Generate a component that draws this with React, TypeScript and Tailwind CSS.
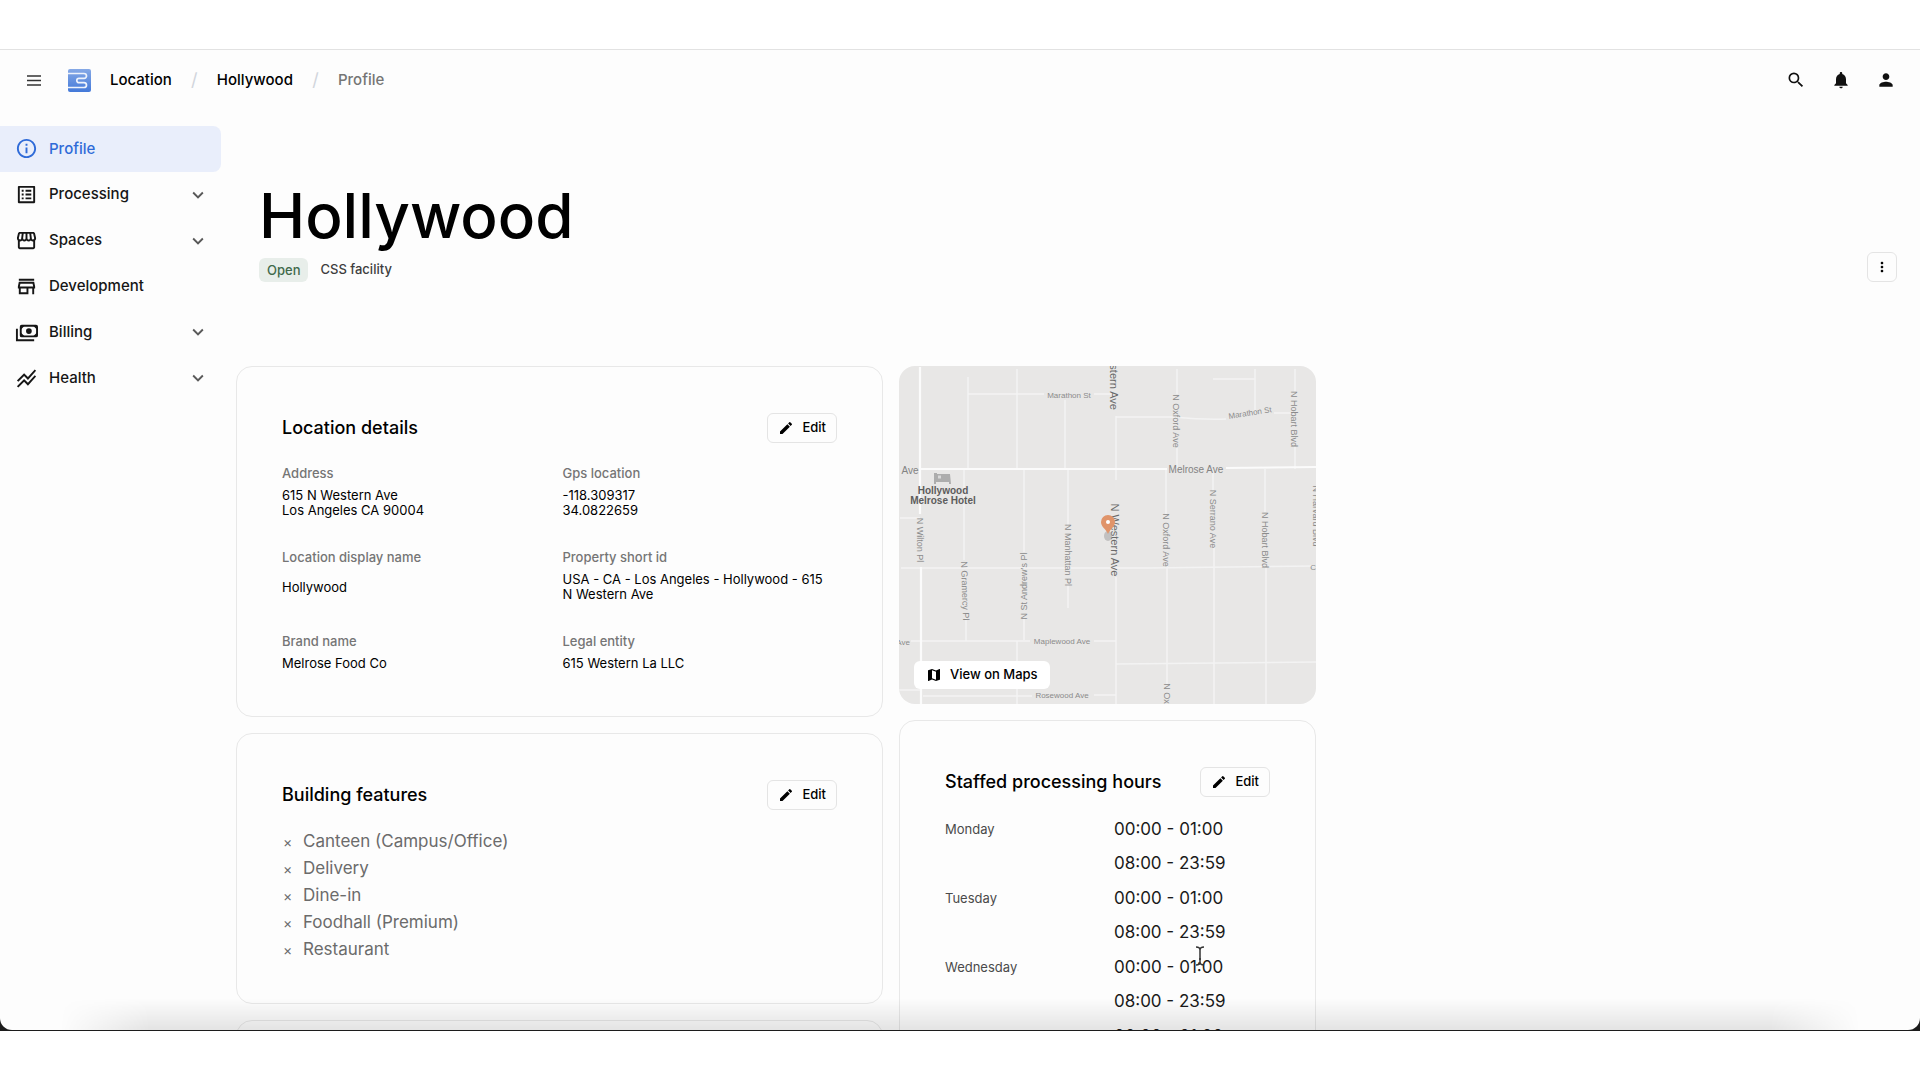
// Location profile page: top bar, side navigation and the detail cards of one facility.

import type { ReactNode } from 'react';
import type { IconType } from 'react-icons';
import {
  MdEdit,
  MdInfoOutline,
  MdKeyboardArrowDown,
  MdMap,
  MdMoreVert,
  MdNotifications,
  MdOutlineListAlt,
  MdOutlineStore,
  MdOutlineStorefront,
  MdPerson,
  MdSearch,
  MdStackedLineChart,
} from 'react-icons/md';

function CashIcon({ className }: { className?: string }) {
  return (
    <svg viewBox="0 0 24 24" className={className} fill="none" stroke="currentColor" strokeWidth="2">
      <rect x="6" y="5" width="17" height="11" rx="1" />
      <circle cx="14.5" cy="10.5" r="3" fill="currentColor" stroke="none" />
      <path d="M6 9V5h4zM19 5h4v4zM6 12v4h4zM23 12v4h-4z" fill="currentColor" stroke="none" />
      <path d="M2 8v12h18" />
    </svg>
  );
}

interface NavItem {
  label: string;
  icon: IconType | typeof CashIcon;
  active?: boolean;
  expandable?: boolean;
}

const NAV: NavItem[] = [
  { label: 'Profile', icon: MdInfoOutline, active: true },
  { label: 'Processing', icon: MdOutlineListAlt, expandable: true },
  { label: 'Spaces', icon: MdOutlineStorefront, expandable: true },
  { label: 'Development', icon: MdOutlineStore },
  { label: 'Billing', icon: CashIcon, expandable: true },
  { label: 'Health', icon: MdStackedLineChart, expandable: true },
];

const DETAILS = [
  { label: 'Address', lines: ['615 N Western Ave', 'Los Angeles CA 90004'] },
  { label: 'Gps location', lines: ['-118.309317', '34.0822659'] },
  { label: 'Location display name', lines: ['Hollywood'] },
  { label: 'Property short id', lines: ['USA - CA - Los Angeles - Hollywood - 615 N Western Ave'] },
  { label: 'Brand name', lines: ['Melrose Food Co'] },
  { label: 'Legal entity', lines: ['615 Western La LLC'] },
];

const FEATURES = ['Canteen (Campus/Office)', 'Delivery', 'Dine-in', 'Foodhall (Premium)', 'Restaurant'];

const HOURS = [
  { day: 'Monday', ranges: ['00:00 - 01:00', '08:00 - 23:59'] },
  { day: 'Tuesday', ranges: ['00:00 - 01:00', '08:00 - 23:59'] },
  { day: 'Wednesday', ranges: ['00:00 - 01:00', '08:00 - 23:59'] },
  { day: 'Thursday', ranges: ['00:00 - 01:00'] },
];

function Logo() {
  return (
    <svg viewBox="0 0 23 23" className="size-[23px]">
      <defs>
        <linearGradient id="logo" x1="0" y1="0" x2="0" y2="1">
          <stop offset="0" stopColor="#86a9e6" />
          <stop offset="1" stopColor="#4379d9" />
        </linearGradient>
      </defs>
      <rect width="23" height="23" rx="2" fill="url(#logo)" />
      <path
        d="M0 4.500h16a2.500 2.500 0 0 1 2.500 2.500a2.500 2.500 0 0 1-2.500 2.300h-5a2.200 2.200 0 0 0 0 4.400h5a2.500 2.500 0 0 1 2.500 2.300a2.500 2.500 0 0 1-2.500 2.500H0"
        fill="none"
        stroke="#eef3fc"
        strokeWidth="1.700"
      />
    </svg>
  );
}

function TopBar() {
  return (
    <header className="flex h-[60px] items-center px-[22px]">
      <button aria-label="Menu" className="flex size-6 items-center justify-center">
        <svg viewBox="0 0 14 11" className="h-[11px] w-[14px]" stroke="#333" strokeWidth="1.600">
          <path d="M0 1h14M0 5.500h14M0 10h14" />
        </svg>
      </button>
      <a href="#home" aria-label="Home" className="ml-[22px]">
        <Logo />
      </a>
      <nav aria-label="Breadcrumb" className="ml-[19px] flex items-center text-[15px] font-medium">
        <a href="#location">Location</a>
        <span className="w-[45px] text-center text-lg leading-6 font-normal text-gray-300">/</span>
        <a href="#hollywood">Hollywood</a>
        <span className="w-[45px] text-center text-lg leading-6 font-normal text-gray-300">/</span>
        <span className="text-[#757575]">Profile</span>
      </nav>
      <div className="mr-[2px] ml-auto flex items-center gap-[25px] text-[#111]">
        <button aria-label="Search" className="flex size-5 items-center justify-center">
          <MdSearch className="size-5" />
        </button>
        <button aria-label="Notifications" className="flex size-5 items-center justify-center">
          <MdNotifications className="size-5" />
        </button>
        <button aria-label="Account" className="flex size-5 items-center justify-center">
          <MdPerson className="size-5" />
        </button>
      </div>
    </header>
  );
}

function Sidebar() {
  return (
    <nav aria-label="Location" className="grid h-[275px] w-[221px] shrink-0 auto-rows-fr">
      {NAV.map(({ label, icon: Icon, active, expandable }) => (
        <a
          key={label}
          href={`#${label.toLowerCase()}`}
          className={`flex items-center rounded-r-lg pr-3 pl-[15px] text-[15px] font-medium ${
            active ? 'bg-[#e9eefb] text-[#2f6bd8]' : 'text-[#161616]'
          }`}
        >
          <Icon className="size-[23px]" />
          <span className="ml-[11px]">{label}</span>
          {expandable && <MdKeyboardArrowDown className="ml-auto size-[22px] text-[#5a5a5a]" />}
        </a>
      ))}
    </nav>
  );
}

function EditButton() {
  return (
    <button className="flex h-[30px] items-center gap-2 rounded-md border border-[#e4e4e4] px-[10px] text-[13px] font-medium">
      <MdEdit className="size-4" />
      Edit
    </button>
  );
}

function Card({ title, className = '', children }: { title: string; className?: string; children: ReactNode }) {
  return (
    <section className={`rounded-2xl border border-[#e8e8e8] px-[45px] pt-[46px] ${className}`}>
      <div className="flex h-[30px] items-center justify-between">
        <h2 className="text-lg font-medium whitespace-nowrap">{title}</h2>
        <EditButton />
      </div>
      {children}
    </section>
  );
}

function LocationDetails() {
  return (
    <Card title="Location details" className="pb-[45px]">
      <dl className="mt-5 grid grid-cols-2 gap-x-[6px] gap-y-[29px] text-[13px]">
        {DETAILS.map(item => (
          <div key={item.label} className="flex flex-col">
            <dt className="leading-5 font-medium text-[#757575]">{item.label}</dt>
            <dd className="mt-[5px] flex flex-1 flex-col justify-center pr-2 leading-[15px]">
              {item.lines.map(line => (
                <span key={line}>{line}</span>
              ))}
            </dd>
          </div>
        ))}
      </dl>
    </Card>
  );
}

function BuildingFeatures() {
  return (
    <Card title="Building features" className="pb-10">
      <ul className="mt-[18px] text-[17px] leading-[27px] text-[#6b6b6b]">
        {FEATURES.map(name => (
          <li key={name} className="flex items-center">
            <span className="w-[21px] pl-px text-sm">×</span>
            {name}
          </li>
        ))}
      </ul>
    </Card>
  );
}

function StaffedHours() {
  return (
    <Card title="Staffed processing hours" className="pb-10">
      <table className="mt-[15px] w-full text-left">
        <tbody>
          {HOURS.map(({ day, ranges }) => (
            <tr key={day} className="align-top">
              <th scope="row" className="w-[52%] text-[13px] leading-[34px] font-normal text-[#4a4a4a]">
                {day}
              </th>
              <td className="pb-px text-[17px] leading-[34px] whitespace-nowrap text-[#1a1a1a]">
                {ranges.map(range => (
                  <div key={range}>{range}</div>
                ))}
              </td>
            </tr>
          ))}
        </tbody>
      </table>
    </Card>
  );
}

// Street names that run down (90) or up (-90) the map.
const STREETS = [
  { name: 'N Wilton Pl', x: 21, y: 174, angle: 90 },
  { name: 'N Gramercy Pl', x: 66, y: 225, angle: 88 },
  { name: 'N St Andrew’s Pl', x: 125, y: 220, angle: -90 },
  { name: 'N Manhattan Pl', x: 169, y: 189, angle: 90 },
  { name: 'N Oxford Ave', x: 277, y: 55, angle: 90 },
  { name: 'N Oxford Ave', x: 267, y: 174, angle: 90 },
  { name: 'N Serrano Ave', x: 314, y: 153, angle: 90 },
  { name: 'N Hobart Blvd', x: 395, y: 53, angle: 90 },
  { name: 'N Hobart Blvd', x: 366, y: 174, angle: 90 },
  { name: 'N Oxford Ave', x: 268, y: 344, angle: 90 },
  { name: 'N Harvard Blvd', x: 417, y: 150, angle: 90 },
];

function MapCard() {
  return (
    <section aria-label="Map" className="relative h-[338px] overflow-hidden rounded-2xl bg-[#e8e7e6]">
      <svg
        viewBox="0 0 417 338"
        preserveAspectRatio="xMidYMid slice"
        className="h-full w-full font-['Liberation_Sans',sans-serif]"
        textAnchor="middle"
        dominantBaseline="central"
      >
        <g fill="none" stroke="#f3f3f3" strokeWidth="1.500">
          <path d="M69 11V103M65 103V194M67 252V275M118 3V103M125 103V186M125 252V274M118 275V338" />
          <path d="M166 34V103M169 103V160M169 218V242M217 50V114M217 211V338" />
          <path d="M278 3V28M278 82V103M267 103V148M268 200V318M314 103V125M315 181V338" />
          <path d="M356 3V46M314 13H356M396 3V26M396 80V103M366 103V146M367 200V338" />
          <path d="M69 28H145M195 28H217M217 51H275Q306 54 327 53M375 47H395M1 152H21" />
          <path d="M2 202H250L417 200M12 275H131M195 275H217M217 298L417 296" />
          <path d="M0 324H22M24 330H133M195 329H217" />
        </g>
        <path d="M21 1V148M22 201V338M21 103L268 103M327 102L417 101" stroke="#fbfbfb" strokeWidth="2.200" fill="none" />
        <g fontSize="8" fill="#8b8b8b">
          <text x="170" y="29">Marathon St</text>
          <text transform="translate(351 47) rotate(-9)">Marathon St</text>
          <text x="163" y="275">Maplewood Ave</text>
          <text x="163" y="329">Rosewood Ave</text>
          <text x="11" y="276" textAnchor="end">Ave</text>
          <text x="415" y="201">Cl</text>
        </g>
        <g fontSize="9" fill="#8b8b8b">
          {STREETS.map((street, i) => (
            <text key={i} transform={`translate(${street.x} ${street.y}) rotate(${street.angle})`}>
              {street.name}
            </text>
          ))}
        </g>
        <g fontSize="10" fill="#838383">
          <text x="297" y="103">Melrose Ave</text>
          <text x="11" y="104">Ave</text>
        </g>
        <g fontSize="11" fill="#6a6a6a">
          <text transform="translate(215 44) rotate(90)" textAnchor="end">N Western Ave</text>
          <text transform="translate(216 174) rotate(90)">N Western Ave</text>
        </g>
        <path d="M35 107h3v1h13l1 10h-2v-2H37v2h-2z" fill="#adadad" />
        <path d="M39 109.500h3v3h-3z" fill="#d9d9d9" />
        <g fontSize="10" fontWeight="bold" fill="#5c5c5c">
          <text x="44" y="124">Hollywood</text>
          <text x="44" y="134">Melrose Hotel</text>
        </g>
        <ellipse cx="209" cy="170" rx="4" ry="5" fill="#9a9a9a" opacity=".5" />
        <path d="M209 168c-2-5-7-7-7-12a7 7 0 0 1 14 0c0 5-5 7-7 12z" fill="#e0946a" />
        <circle cx="209" cy="156" r="2" fill="#fff" />
      </svg>
      <a
        href="#maps"
        className="absolute bottom-[15px] left-[15px] flex h-7 items-center gap-2 rounded-md bg-white px-3 text-[13px] font-medium"
      >
        <MdMap className="size-4" />
        View on Maps
      </a>
    </section>
  );
}

function TextCursor() {
  return (
    <svg viewBox="0 0 10 20" className="absolute top-[946px] left-[1195px] h-5 w-[10px]">
      <path d="M1 1Q5 1 5 4Q5 1 9 1M5 4V16M1 19Q5 19 5 16Q5 19 9 19M4 13H6" fill="none" stroke="#333" strokeWidth="1.500" />
    </svg>
  );
}

export default function App() {
  return (
    <div className="relative flex h-screen flex-col bg-white pt-[49px] pb-[49px] font-['Inter',sans-serif] text-black">
      <div className="flex min-h-0 flex-1 flex-col bg-linear-to-b from-white from-50% to-[#1c1c1c] to-50% pb-px">
        <div className="relative min-h-0 flex-1 overflow-hidden rounded-b-xl border-t border-[#e2e2e2] bg-[#fdfdfd]">
          <TopBar />
          <div className="flex pt-4">
            <Sidebar />
            <main className="min-w-0 flex-1 pt-[54px] pr-[23px] pl-[15px]">
              <div className="flex items-end justify-between pl-[23px]">
                <div>
                  <h1 className="text-[62px] leading-[72px] font-medium">Hollywood</h1>
                  <div className="mt-[6px] flex items-center gap-3 text-[13px] font-medium">
                    <span className="rounded-md bg-[#e8eeea] px-2 leading-6 text-[#41694b]">Open</span>
                    <span className="text-[#3d3d3d]">CSS facility</span>
                  </div>
                </div>
                <button
                  aria-label="More actions"
                  className="flex size-[30px] items-center justify-center rounded-md border border-[#e4e4e4]"
                >
                  <MdMoreVert className="size-4" />
                </button>
              </div>
              <div className="mt-[84px] grid max-w-[1080px] grid-cols-[647fr_417fr] items-start gap-4">
                <div className="grid gap-4">
                  <LocationDetails />
                  <BuildingFeatures />
                  <section className="h-40 rounded-2xl border border-[#e8e8e8]" />
                </div>
                <div className="grid gap-4">
                  <MapCard />
                  <StaffedHours />
                </div>
              </div>
            </main>
          </div>
          <div className="pointer-events-none absolute inset-x-[60px] bottom-0 h-8 bg-linear-to-t from-black/10 to-transparent mask-x-from-95%" />
        </div>
      </div>
      <TextCursor />
    </div>
  );
}
